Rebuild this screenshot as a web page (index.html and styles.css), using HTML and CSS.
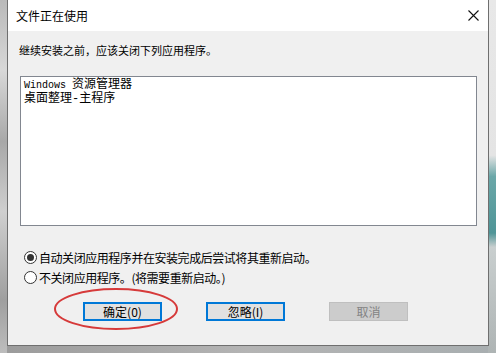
FILE: index.html
```html
<!DOCTYPE html>
<html lang="zh">
<head>
<meta charset="utf-8">
<title>文件正在使用</title>
<link rel="stylesheet" href="styles.css">
</head>
<body>
<div class="desktop">
  <div class="dialog">
    <div class="titlebar">
      <span class="title">文件正在使用</span>
      <span class="close">
        <svg width="11" height="11" viewBox="0 0 11 11"><path d="M0.5 0.5 L10.5 10.5 M10.5 0.5 L0.5 10.5" stroke="#111" stroke-width="1.1" fill="none"/></svg>
      </span>
    </div>
    <div class="content">
      <div class="label">继续安装之前，应该关闭下列应用程序。</div>
      <div class="listbox">
        <div class="item"><span class="latin">Windows </span>资源管理器</div>
        <div class="item">桌面整理-主程序</div>
      </div>
      <div class="options">
        <div class="radio-row"><span class="radio checked"></span><span class="opt">自动关闭应用程序并在安装完成后尝试将其重新启动。</span></div>
        <div class="radio-row"><span class="radio"></span><span class="opt">不关闭应用程序。(将需要重新启动。)</span></div>
      </div>
      <div class="buttons">
        <div class="btn default">确定(0)</div>
        <div class="btn default">忽略(I)</div>
        <div class="btn disabled">取消</div>
      </div>
    </div>
    <svg class="annot" width="130" height="46" viewBox="0 0 130 46"><ellipse cx="65" cy="23" rx="61" ry="20" fill="none" stroke="#d63a3a" stroke-width="2"/></svg>
  </div>
</div>
</body>
</html>
```
FILE: styles.css
```css
html, body {
  margin: 0;
  padding: 0;
}
body {
  width: 496px;
  height: 353px;
  overflow: hidden;
  background: linear-gradient(180deg, #dcdcdc 0%, #c9c9c9 60%, #a9a9a9 100%);
  font-family: "Noto Sans CJK SC", "Noto Sans", sans-serif;
  font-size: 12px;
  color: #000;
}
.desktop {
  width: 496px;
  height: 353px;
  background:
    linear-gradient(180deg, #e8e8e8 0%, #e4e4e4 44%, #6aa7a8 50%, #4f9597 66%, #c9cfcf 70%, #aeb4b4 100%) right top / 8px 100% no-repeat,
    linear-gradient(180deg, #b9b9b9 0%, #d8d8d8 20%, #a8a8a8 40%, #cfcfcf 60%, #9f9f9f 85%, #bdbdbd 100%) left top / 7px 100% no-repeat,
    linear-gradient(90deg, #9b9b9b 0%, #b4b4b4 50%, #a8aeb0 100%);
}
.dialog {
  position: relative;
  margin-left: 7px;
  width: 480px;
  height: 345px;
  border: 1px solid #6f6f6f;
  border-top: none;
  background: #f0f0f0;
  display: flex;
  flex-direction: column;
}
.titlebar {
  height: 31px;
  background: #fff;
  display: flex;
  align-items: center;
  justify-content: space-between;
  padding-left: 8px;
  padding-right: 9px;
  flex: none;
}
.title {
  font-size: 12px;
  line-height: 16px;
  color: #000;
}
.close {
  display: flex;
  width: 11px;
  height: 11px;
}
.content {
  display: flex;
  flex-direction: column;
  padding-top: 11px;
}
.label {
  padding-left: 11px;
  line-height: 16px;
  height: 16px;
  font-size: 11px;
}
.listbox {
  margin: 18px 11px 0 12px;
  height: 150px;
  box-sizing: border-box;
  border: 1px solid #828790;
  background: #fff;
  padding: 1px 3px;
}
.item {
  font-family: "Liberation Mono", "Noto Sans CJK SC", monospace;
  font-size: 12px;
  line-height: 14px;
  height: 14px;
}
.latin {
  font-family: "Liberation Mono", "DejaVu Sans Mono", monospace;
  font-size: 10px;
}
.options {
  margin-top: 21px;
  display: flex;
  flex-direction: column;
}
.radio-row {
  display: flex;
  align-items: center;
  height: 20px;
  padding-left: 16px;
  gap: 2px;
}
.opt {
  letter-spacing: -0.45px;
}
.radio {
  width: 11px;
  height: 11px;
  border: 1px solid #333;
  border-radius: 50%;
  background: #fff;
  display: flex;
  align-items: center;
  justify-content: center;
  flex: none;
}
.radio.checked::after {
  content: "";
  width: 7px;
  height: 7px;
  border-radius: 50%;
  background: #333;
}
.buttons {
  margin-top: 15px;
  padding-left: 75px;
  display: flex;
  gap: 44px;
}
.btn {
  width: 79px;
  height: 19px;
  box-sizing: border-box;
  background: #e1e1e1;
  border: 1px solid #adadad;
  display: flex;
  align-items: center;
  justify-content: center;
  font-size: 12px;
  color: #000;
}
.btn.default {
  border: 2px solid #0078d7;
}
.btn.disabled {
  background: #cccccc;
  border-color: #bfbfbf;
  color: #838383;
}
.annot {
  position: absolute;
  left: 43px;
  top: 286px;
}
```
